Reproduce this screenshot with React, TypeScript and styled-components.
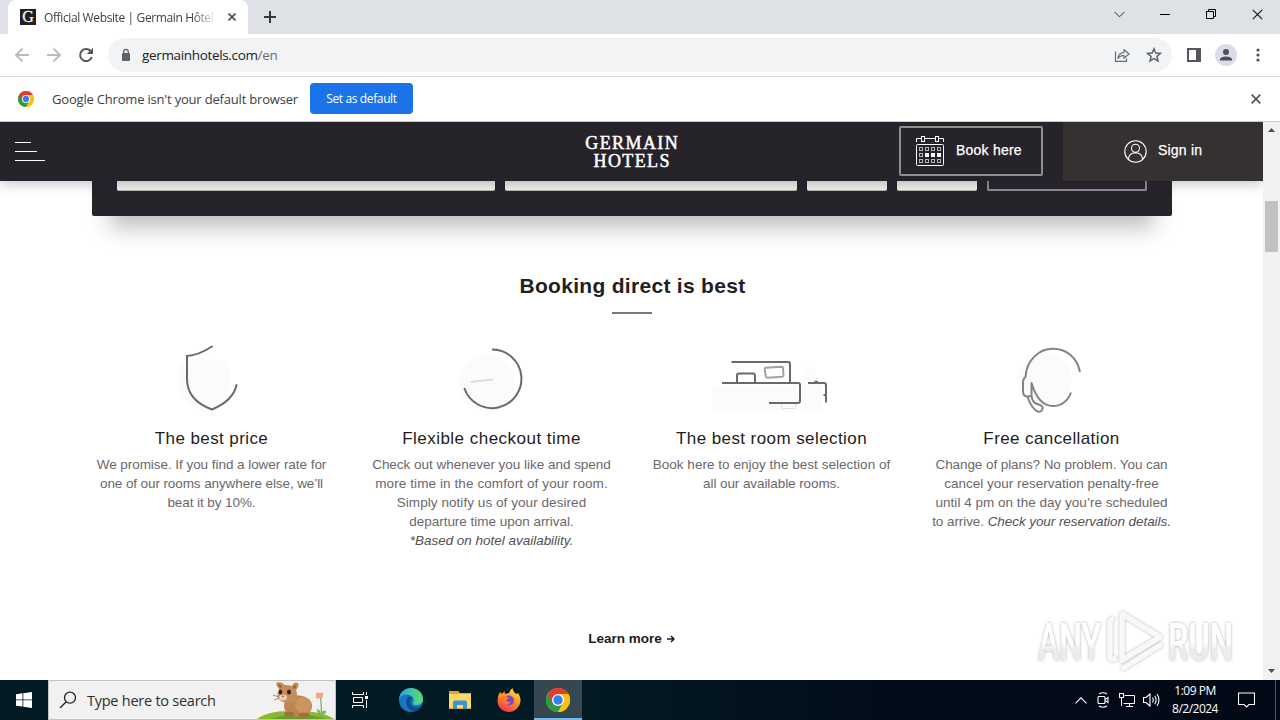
import React from "react";
import styled, { createGlobalStyle, css } from "styled-components";

const uiFont = `"Open Sans", "Noto Sans", sans-serif`;
const siteFont = `"Liberation Sans", Arial, sans-serif`;

const GlobalStyle = createGlobalStyle`
    * {
        box-sizing: border-box;
    }
    body {
        margin: 0;
        background: #ffffff;
        overflow: hidden;
    }
    svg {
        display: block;
        flex: none;
    }
`;

const Screen = styled.div`
    width: 1280px;
    height: 720px;
    display: flex;
    flex-direction: column;
    overflow: hidden;
    font-family: ${uiFont};
`;

/* ---------- browser ---------- */

const TabStrip = styled.div`
    height: 34px;
    flex: none;
    display: flex;
    padding-left: 8px;
    background: #dee1e6;
`;

const Tab = styled.div`
    width: 240px;
    display: flex;
    align-items: center;
    padding: 0 11px 0 12px;
    background: #ffffff;
    border-radius: 8px 8px 0 0;
`;

const Favicon = styled.div`
    width: 16px;
    height: 16px;
    background: #231f20;
    color: #f4f4f4;
    font: 16px/16px "Liberation Serif", serif;
    -webkit-text-stroke: 0.3px #f4f4f4;
    text-align: center;
`;

const TabTitle = styled.div`
    width: 169px;
    margin: 0 15px 0 8px;
    overflow: hidden;
    white-space: nowrap;
    font-size: 12px;
    letter-spacing: -0.38px;
    color: #3c4043;
    mask-image: linear-gradient(90deg, #000 148px, transparent 173px);
`;

const NewTab = styled.div`
    width: 44px;
    display: grid;
    place-items: center;
`;

const WindowButtons = styled.div`
    margin-left: auto;
    display: grid;
    grid-template-columns: repeat(4, 46px);
    place-items: center;
    height: 28px;
`;

const Toolbar = styled.div`
    height: 43px;
    flex: none;
    display: flex;
    align-items: center;
    padding: 0 14px;
    background: #ffffff;
    border-bottom: 1px solid #dadce0;
`;

const NavButtons = styled.div`
    display: flex;
    gap: 16px;
    margin-right: 14px;
`;

const AddressBar = styled.div`
    width: 1064px;
    height: 34px;
    display: flex;
    align-items: center;
    padding: 0 10px;
    border-radius: 17px;
    background: #f1f3f4;
    font-size: 13.5px;
    color: #202124;
`;

const UrlText = styled.span`
    margin-left: 8px;
    letter-spacing: -0.34px;
`;

const UrlPath = styled.span`
    color: #6a6e73;
`;

const AddressActions = styled.div`
    margin-left: auto;
    display: flex;
    gap: 16px;
`;

const ToolbarActions = styled.div`
    display: flex;
    align-items: center;
    gap: 13px;
    margin-left: 14px;
`;

const Avatar = styled.div`
    width: 22px;
    height: 22px;
    border-radius: 50%;
    background: #dadce6;
    display: grid;
    place-items: center;
`;

const InfoBar = styled.div`
    height: 45px;
    flex: none;
    display: flex;
    align-items: center;
    padding: 0 19px 0 18px;
    border-bottom: 1px solid #c9cbce;
    background: #ffffff;
    color: #3c4043;
    font-size: 13px;
`;

const InfoText = styled.span`
    width: 246px;
    margin: 0 12px 0 18px;
    white-space: nowrap;
    letter-spacing: -0.19px;
`;

const DefaultButton = styled.button`
    width: 103px;
    height: 31px;
    margin-top: -2px;
    padding: 0;
    border: 0;
    border-radius: 4px;
    background: #1a73e8;
    color: #ffffff;
    font: 12px ${uiFont};
    letter-spacing: -0.38px;
`;

const InfoClose = styled.div`
    margin-left: auto;
`;

/* ---------- page ---------- */

const Viewport = styled.div`
    height: 558px;
    flex: none;
    display: flex;
    position: relative;
`;

const Page = styled.main`
    width: 1263px;
    display: flex;
    flex-direction: column;
    align-items: center;
    overflow: hidden;
    background: #ffffff;
    font-family: ${siteFont};
`;

const SiteHeader = styled.header`
    width: 100%;
    height: 59px;
    flex: none;
    display: grid;
    grid-template-columns: 1fr 200px 1fr;
    align-items: center;
    background: #27232b;
    color: #ffffff;
    box-shadow: 0 2px 12px rgba(39, 35, 50, 0.3);
    z-index: 1;
`;

const MenuLines = styled.div`
    display: flex;
    flex-direction: column;
    gap: 8px;
    margin-left: 15px;
`;

const MenuLine = styled.span<{ $width: number }>`
    width: ${({ $width }) => $width}px;
    height: 1px;
    background: #ffffff;
`;

const Logo = styled.div`
    font: 18px/18px "Liberation Serif", serif;
    -webkit-text-stroke: 0.5px #ffffff;
    text-align: center;
    white-space: nowrap;
`;

const LogoLine = styled.div<{ $spacing: number }>`
    letter-spacing: ${({ $spacing }) => $spacing}px;
    margin-right: -${({ $spacing }) => $spacing}px;
`;

const HeaderActions = styled.div`
    height: 59px;
    display: flex;
    justify-content: flex-end;
    align-items: center;
    gap: 20px;
`;

const headerLabel = css`
    display: flex;
    align-items: center;
    font-size: 14px;
    color: #ffffff;
    -webkit-text-stroke: 0.25px #ffffff;
    white-space: nowrap;
`;

const ActionLabel = styled.span`
    margin-bottom: 2px;
`;

const BookButton = styled.div`
    ${headerLabel}
    width: 144px;
    height: 50px;
    gap: 12px;
    padding-left: 15px;
    border: 2px solid #8f8c92;
    border-radius: 2px;
    letter-spacing: 0.22px;
    margin-bottom: 1px;
`;

const SignIn = styled.div`
    ${headerLabel}
    width: 200px;
    height: 59px;
    gap: 11px;
    padding: 0 0 1px 61px;
    background: #353131;
    letter-spacing: 0.2px;
`;

// the top of the panel is scrolled away under the header
const BookingPanel = styled.section`
    width: 1080px;
    height: 135px;
    flex: none;
    display: flex;
    gap: 10px;
    margin-top: -100px;
    padding: 100px 25px 25px;
    border-radius: 0 0 2px 2px;
    background: #27232b;
    box-shadow: 0 29px 22px -18px rgba(0, 0, 0, 0.27);
`;

const Field = styled.div<{ $width: number }>`
    width: ${({ $width }) => $width}px;
    height: 10px;
    border-radius: 0 0 2px 2px;
    border-bottom: 1px solid #b8b7b8;
    background: #f2f1ed;
`;

const SearchButton = styled.div`
    width: 160px;
    height: 10px;
    border: 2px solid #8f8c92;
    border-top: 0;
    border-radius: 0 0 2px 2px;
`;

const Heading = styled.h2`
    margin: 56px -2px 0 0;
    font-size: 21px;
    line-height: 28px;
    font-weight: bold;
    letter-spacing: 0.3px;
    color: #231f20;
`;

const Rule = styled.div`
    width: 40px;
    height: 2px;
    margin-top: 12px;
    background: #7c797d;
`;

const Benefits = styled.section`
    display: grid;
    grid-template-columns: repeat(4, 280px);
    margin-top: 31px;
    height: 214px;
`;

const Benefit = styled.article`
    display: flex;
    flex-direction: column;
    align-items: center;
    text-align: center;
`;

const BenefitTitle = styled.h3<{ $spacing: number }>`
    margin: 13px 0 0;
    font-size: 17px;
    line-height: 22px;
    font-weight: normal;
    letter-spacing: ${({ $spacing }) => $spacing}px;
    color: #1f1c20;
`;

const BenefitText = styled.p`
    margin: 5px 0 0;
    font-size: 13.5px;
    line-height: 19px;
    color: #6b686c;
`;

const Line = styled.span<{ $spacing: number }>`
    display: block;
    white-space: nowrap;
    letter-spacing: ${({ $spacing }) => $spacing}px;

    em {
        color: #545155;
    }
`;

const LearnMore = styled.a`
    display: flex;
    align-items: center;
    gap: 5px;
    margin-top: 70px;
    font-size: 13.5px;
    line-height: 20px;
    font-weight: bold;
    letter-spacing: 0.02px;
    color: #1f1c20;
`;

const Scrollbar = styled.div`
    width: 17px;
    display: flex;
    flex-direction: column;
    align-items: center;
    justify-content: space-between;
    padding: 6px 0 7px;
    background: #f1f1f1;
`;

const Thumb = styled.div`
    width: 13px;
    height: 51px;
    margin: 69px 0 auto;
    background: #c1c1c1;
`;

const Watermark = styled.div`
    position: absolute;
    left: 1028px;
    top: 482px;
`;

/* ---------- taskbar ---------- */

const Taskbar = styled.footer`
    height: 40px;
    flex: none;
    display: flex;
    background: linear-gradient(90deg, #011a22 0, #021a23 45%, #020c1a 70%, #020916 100%);
    color: #ffffff;
`;

const TaskItem = styled.div<{ $active?: boolean; $width?: number }>`
    width: ${({ $width = 49 }) => $width}px;
    display: grid;
    place-items: center;
    ${({ $active }) =>
        $active &&
        css`
            background: #35474f;
            border-bottom: 2px solid #76b9ed;
            padding-top: 2px;
        `}
`;

const SearchBox = styled.div`
    width: 288px;
    height: 40px;
    display: flex;
    align-items: center;
    border: 1px solid #bfc3c5;
    background: #f1f1f1;
    color: #2f2f2f;
    font-size: 14.5px;
    letter-spacing: -0.25px;
    padding-left: 10px;
    gap: 10px;
    white-space: nowrap;

    svg:last-child {
        margin-left: auto;
    }
`;

const Tray = styled.div`
    margin-left: auto;
    display: flex;
    align-items: center;
`;

const TrayIcons = styled.div`
    display: flex;
    align-items: center;
    gap: 7px;
    margin-right: 1px;
`;

const Clock = styled.div`
    width: 60px;
    margin: 0 13px 0 4px;
    display: grid;
    justify-items: center;
    font-size: 12px;
    line-height: 18px;
    letter-spacing: -0.5px;
    white-space: nowrap;
`;

const ShowDesktop = styled.div`
    width: 5px;
    height: 40px;
    margin-left: 20px;
    border-left: 1px solid #4d5964;
`;

function Cross({ size, color, width }: { size: number; color: string; width: number }) {
    return (
        <svg width={size} height={size} viewBox="0 0 10 10" stroke={color} strokeWidth={width} fill="none">
            <path d="M.7 .7L9.3 9.3M9.3 .7L.7 9.3" />
        </svg>
    );
}

function ChromeLogo({ size }: { size: number }) {
    return (
        <svg width={size} height={size} viewBox="0 0 48 48">
            <circle cx="24" cy="24" r="24" fill="#fbc116" />
            <path d="M24 24L34.4 30 24 48A24 24 0 0 1 3.2 12Z" fill="#2a9c48" />
            <path d="M3.2 12A24 24 0 0 1 44.8 12H24L13.6 30Z" fill="#e33b2e" />
            <path d="M24 12H44.8A24 24 0 0 1 24 48L34.4 30Z" fill="#fbc116" />
            <circle cx="24" cy="24" r="12" fill="#fff" />
            <circle cx="24" cy="24" r="9.4" fill="#3b7ded" />
        </svg>
    );
}

function CalendarIcon() {
    const rows = [0, 1, 2];
    const cols = [0, 1, 2, 3];
    return (
        <svg width="28" height="30" viewBox="0 0 28 30" fill="none" stroke="#fff">
            <path d="M.5 6V2.5H5M9 2.5H19M23 2.5H27.500V6" />
            <rect x="5.500" y=".5" width="3" height="5" />
            <rect x="19.500" y=".5" width="3" height="5" />
            <rect x=".5" y="8.500" width="27" height="21" rx="1" />
            {rows.map((r) =>
                cols.map((c) => (
                    <rect
                        key={`${r}-${c}`}
                        x={3.5 + c * 6}
                        y={11.5 + r * 6}
                        width="3"
                        height="3"
                        stroke={r === 1 && c > 0 ? "#fff" : "#b5b3b7"}
                        fill={r === 1 && c > 0 ? "#fff" : "none"}
                    />
                ))
            )}
        </svg>
    );
}

function ShieldIcon() {
    return (
        <svg width="130" height="70" viewBox="147 345 130 70" fill="none">
            <path d="M180 364Q196 357 205 359L229 362V386Q226 402 205 413Q180 402 179 384Z" fill="#fbfbfb" />
            <path
                d="M212 346.500Q198 355.500 187 356V379C187 395 197 404 212 409.500C225 404 234 397 236.500 385"
                stroke="#6c696b"
                strokeWidth="2"
                strokeLinecap="round"
            />
        </svg>
    );
}

function ClockIcon() {
    return (
        <svg width="130" height="70" viewBox="427 345 130 70" fill="none" strokeWidth="2">
            <circle cx="487" cy="383" r="28" fill="#fbfbfb" />
            <path d="M470.500 382L493 379.500" stroke="#dcdcdc" />
            <path d="M492 349.500A29.300 29.300 0 1 1 464.300 388" stroke="#6c696b" />
        </svg>
    );
}

function RoomIcon() {
    return (
        <svg width="130" height="70" viewBox="707 345 130 70" fill="none" stroke="#6c696b" strokeWidth="2">
            <path d="M712 386H800V384H822V413H780V410H716Q712 410 712 404Z" fill="#fcfcfc" stroke="none" />
            <circle cx="809" cy="374" r="7" fill="#fcfcfc" stroke="none" />
            <path d="M731.500 362H788Q790 362 790 364V383" />
            <path d="M722 383H798Q800 383 800 385V401Q800 403 798 403H769" />
            <path d="M737 382V375Q737 373.500 739 373.500H753Q755 373.500 755 375.500V382" />
            <path
                d="M765.500 367.800L781.500 366.700Q783 366.700 783 368L783.500 375Q783.500 376.500 782 376.700L767.500 377.700Q766 377.700 765.800 376L764.600 369.500Q764.500 368 765.500 367.800Z"
                stroke="#a3a1a2"
            />
            <path d="M808 383H824Q826 383 826 385V402.500M814.500 381.700H818M824.500 394V396" />
            <path d="M781.500 404V407Q781.500 408.500 783 408.500H794Q796 408.500 796 407V404" stroke="#e2e2e2" strokeWidth="1" />
        </svg>
    );
}

function HeadsetIcon() {
    return (
        <svg width="130" height="70" viewBox="987 345 130 70" fill="none" stroke="#858284" strokeWidth="2" strokeLinejoin="round">
            <circle cx="1045" cy="380" r="27" fill="#fbfbfb" stroke="none" />
            <path d="M1080 372C1077 357 1066 348.800 1053 348.800C1038 348.800 1026.500 361 1025.500 377Q1023 378.500 1023 383V391Q1023 396.500 1027.500 396.500L1031.500 396V383C1036 398 1043 406 1053 406C1061 406 1068 401 1071 392.500" />
            <path d="M1027.500 397C1030 404 1034 410 1038 411.700C1042.500 412.500 1044 407.500 1041 405.500C1038 403 1036 406 1032.500 400L1031.500 396" />
        </svg>
    );
}

function Critter() {
    return (
        <svg width="78" height="38" viewBox="0 0 78 38">
            <path d="M0 38Q12 29 36 30Q64 29 77 38Z" fill="#8cb82f" />
            <path d="M14 38Q40 29 70 38Z" fill="#6b9d2c" />
            <path d="M64 36Q65 23 63 14" stroke="#72ad61" strokeWidth="1.200" fill="none" />
            <path d="M64 34Q59 31 60 28Q64 29 64 34Q65 28 69 30Q70 33 64 34Z" fill="#79b85e" />
            <path d="M59 13Q60 10 63 12Q67 10 66 15Q66 18 63 17Q59 19 59 16Z" fill="#f4a58a" />
            <ellipse cx="41" cy="25" rx="14" ry="10.500" fill="#bd8450" />
            <ellipse cx="46" cy="24" rx="8" ry="8" fill="#cb9560" />
            <path d="M22 8Q17 2 21 1Q25 1 28 4Q32 4 35 5Q37 0 41 2Q43 4 39 9Q42 16 37 21Q31 24 24 20Q18 16 22 8Z" fill="#c48d59" />
            <path d="M21 3L25 5 23 7ZM39 4L36 6 38 8Z" fill="#87532f" />
            <ellipse cx="23.500" cy="11" rx="1.800" ry="2.500" fill="#302019" />
            <ellipse cx="32" cy="11" rx="2" ry="2.500" fill="#302019" />
            <ellipse cx="26" cy="16.500" rx="4" ry="3" fill="#ead1b2" />
            <path d="M25 15H27L26 16ZM16 14L22 16M17 19L22 17" stroke="#8c604a" strokeWidth=".7" />
            <ellipse cx="32" cy="33" rx="5" ry="2.200" fill="#a56d3d" />
            <ellipse cx="47" cy="34" rx="6" ry="2.200" fill="#a56d3d" />
        </svg>
    );
}

function AnyRunMark() {
    return (
        <svg width="216" height="72" viewBox="1028 604 216 72">
            <defs>
                <linearGradient id="fade" x1="0" y1="0" x2="0" y2="1">
                    <stop offset="0.5" stopColor="#ffffff" />
                    <stop offset="0.62" stopColor="#ececec" />
                </linearGradient>
                <filter id="halo" x="-10%" y="-10%" width="120%" height="120%">
                    <feDropShadow dx="0" dy="0" stdDeviation="1.600" floodColor="#000" floodOpacity="0.36" />
                </filter>
            </defs>
            <g filter="url(#halo)" fill="url(#fade)" fontFamily="Roboto, sans-serif" fontWeight="500" fontSize="52">
                <text x="1038" y="660" textLength="63" lengthAdjust="spacingAndGlyphs">
                    ANY
                </text>
                <text x="1168" y="660" textLength="65" lengthAdjust="spacingAndGlyphs">
                    RUN
                </text>
                <g fill="none" stroke="#f8f8f8" strokeWidth="5" strokeLinejoin="round">
                    <path d="M1122 614L1160 637L1122 660Z" />
                    <path d="M1114 619Q1110 619 1110 624V657Q1111 661 1116 658M1122 669L1162 644" />
                </g>
            </g>
        </svg>
    );
}

// [content, letter spacing]
type TextLine = [React.ReactNode, number];

interface BenefitItem {
    title: string;
    spacing: number;
    icon: React.ReactNode;
    lines: TextLine[];
}

const benefits: BenefitItem[] = [
    {
        title: "The best price",
        spacing: 0.4,
        icon: <ShieldIcon />,
        lines: [
            ["We promise. If you find a lower rate for", -0.05],
            ["one of our rooms anywhere else, we’ll", -0.1],
            ["beat it by 10%.", -0.08],
        ],
    },
    {
        title: "Flexible checkout time",
        spacing: 0.48,
        icon: <ClockIcon />,
        lines: [
            ["Check out whenever you like and spend", -0.02],
            ["more time in the comfort of your room.", 0.1],
            ["Simply notify us of your desired", 0.06],
            ["departure time upon arrival.", -0.02],
            [<em>*Based on hotel availability.</em>, -0.02],
        ],
    },
    {
        title: "The best room selection",
        spacing: 0.42,
        icon: <RoomIcon />,
        lines: [
            ["Book here to enjoy the best selection of", 0.03],
            ["all our available rooms.", -0.08],
        ],
    },
    {
        title: "Free cancellation",
        spacing: 0.4,
        icon: <HeadsetIcon />,
        lines: [
            ["Change of plans? No problem. You can", -0.08],
            ["cancel your reservation penalty-free", 0],
            ["until 4 pm on the day you’re scheduled", 0.02],
            [
                <>
                    to arrive. <em>Check your reservation details.</em>
                </>,
                -0.07,
            ],
        ],
    },
];

function Browser() {
    return (
        <>
            <TabStrip>
                <Tab>
                    <Favicon>G</Favicon>
                    <TabTitle>Official Website | Germain Hôtels</TabTitle>
                    <Cross size={8} color="#4a4d51" width={2} />
                </Tab>
                <NewTab>
                    <svg width="12" height="12" viewBox="0 0 12 12" stroke="#35383c" strokeWidth="2">
                        <path d="M6 0V12M0 6H12" />
                    </svg>
                </NewTab>
                <WindowButtons>
                    <svg width="11" height="7" viewBox="0 0 11 7" fill="none" stroke="#333">
                        <path d="M.5 .8L5.500 5.800L10.500 .8" />
                    </svg>
                    <svg width="10" height="1">
                        <rect width="10" height="1" fill="#000" />
                    </svg>
                    <svg width="10" height="10" viewBox="0 0 10 10" fill="none" stroke="#000">
                        <path d="M.5 2.500H7.500V9.500H.5ZM2.500 2.500V.5H9.500V7.500H7.500" />
                    </svg>
                    <Cross size={11} color="#111" width={1} />
                </WindowButtons>
            </TabStrip>
            <Toolbar>
                <NavButtons>
                    <svg width="16" height="16" viewBox="0 0 16 16" fill="none" stroke="#babcbe" strokeWidth="1.800">
                        <path d="M15 8H2M8.500 1.500L2 8L8.500 14.500" />
                    </svg>
                    <svg width="16" height="16" viewBox="0 0 16 16" fill="none" stroke="#babcbe" strokeWidth="1.800">
                        <path d="M1 8H14M7.500 1.500L14 8L7.500 14.500" />
                    </svg>
                    <svg width="16" height="16" viewBox="0 0 16 16" fill="none" stroke="#54575b" strokeWidth="2">
                        <path d="M13.800 10A6 6 0 1 1 12.500 4" />
                        <path d="M15 .8V7H8.800Z" fill="#54575b" stroke="none" />
                    </svg>
                </NavButtons>
                <AddressBar>
                    <svg width="16" height="16" viewBox="0 0 16 16">
                        <rect x="4" y="6" width="8" height="8" rx="1" fill="#5f6368" />
                        <path d="M5.700 6.500V4.700A2.300 2.300 0 0 1 10.300 4.700V6.500" fill="none" stroke="#5f6368" strokeWidth="1.300" />
                    </svg>
                    <UrlText>
                        germainhotels.com<UrlPath>/en</UrlPath>
                    </UrlText>
                    <AddressActions>
                        <svg width="16" height="16" viewBox="0 0 16 16" fill="none" stroke="#696c71" strokeWidth="1.200">
                            <path d="M1.500 4.500V14.400H12.500V11.500" />
                            <path d="M4 11.500Q4.500 5.800 10 5.300V2.500L15 7L10 11.300V8.500Q6 8.300 4 11.500Z" strokeLinejoin="round" />
                        </svg>
                        <svg width="16" height="16" viewBox="0 0 16 16" fill="none" stroke="#5f6368" strokeWidth="1.500">
                            <path d="M8 1.800L9.800 6L14.400 6.400L10.900 9.400L12 13.900L8 11.500L4 13.900L5.100 9.400L1.600 6.400L6.200 6Z" />
                        </svg>
                    </AddressActions>
                </AddressBar>
                <ToolbarActions>
                    <svg width="16" height="16" viewBox="0 0 16 16">
                        <path d="M1 1H15V15H1ZM3 3V13H10V3Z" fill="#53565a" fillRule="evenodd" />
                    </svg>
                    <Avatar>
                        <svg width="14" height="14" viewBox="0 0 14 14" fill="#4b4f60">
                            <circle cx="7" cy="4" r="3" />
                            <path d="M1 12.500V11Q2 8.500 7 8.500Q12 8.500 13 11V12.500Z" />
                        </svg>
                    </Avatar>
                    <svg width="16" height="16" viewBox="0 0 16 16" fill="#4f5256">
                        <circle cx="8" cy="3" r="1.600" />
                        <circle cx="8" cy="8" r="1.600" />
                        <circle cx="8" cy="13" r="1.600" />
                    </svg>
                </ToolbarActions>
            </Toolbar>
            <InfoBar>
                <ChromeLogo size={16} />
                <InfoText>Google Chrome isn't your default browser</InfoText>
                <DefaultButton>Set as default</DefaultButton>
                <InfoClose>
                    <Cross size={10} color="#55585c" width={1.8} />
                </InfoClose>
            </InfoBar>
        </>
    );
}

function App() {
    return (
        <>
            <GlobalStyle />
            <Screen>
                <Browser />
                <Viewport>
                    <Page>
                        <SiteHeader>
                            <MenuLines>
                                <MenuLine $width={16} />
                                <MenuLine $width={22} />
                                <MenuLine $width={30} />
                            </MenuLines>
                            <Logo>
                                <LogoLine $spacing={1.4}>GERMAIN</LogoLine>
                                <LogoLine $spacing={1.4}>HOTELS</LogoLine>
                            </Logo>
                            <HeaderActions>
                                <BookButton>
                                    <CalendarIcon />
                                    <ActionLabel>Book here</ActionLabel>
                                </BookButton>
                                <SignIn>
                                    <svg width="23" height="23" viewBox="0 0 23 23" fill="none" stroke="#fff" strokeWidth="1.100">
                                        <circle cx="11.500" cy="11.500" r="10.700" />
                                        <circle cx="11.500" cy="8.300" r="4" />
                                        <path d="M4.300 19.300Q5 12.800 11.500 12.700Q18 12.800 18.700 19.300" />
                                    </svg>
                                    <ActionLabel>Sign in</ActionLabel>
                                </SignIn>
                            </HeaderActions>
                        </SiteHeader>
                        <BookingPanel>
                            <Field $width={378} />
                            <Field $width={292} />
                            <Field $width={80} />
                            <Field $width={80} />
                            <SearchButton />
                        </BookingPanel>
                        <Heading>Booking direct is best</Heading>
                        <Rule />
                        <Benefits>
                            {benefits.map(({ title, spacing, icon, lines }) => (
                                <Benefit key={title}>
                                    {icon}
                                    <BenefitTitle $spacing={spacing}>{title}</BenefitTitle>
                                    <BenefitText>
                                        {lines.map(([content, lineSpacing], i) => (
                                            <Line key={i} $spacing={lineSpacing}>
                                                {content}
                                            </Line>
                                        ))}
                                    </BenefitText>
                                </Benefit>
                            ))}
                        </Benefits>
                        <LearnMore>
                            Learn more
                            <svg width="8" height="8" viewBox="0 0 8 8" fill="none" stroke="#1f1c20" strokeWidth="1.500">
                                <path d="M0 4H7M4 1L7 4L4 7" />
                            </svg>
                        </LearnMore>
                    </Page>
                    <Scrollbar>
                        <svg width="7" height="4" viewBox="0 0 7 4">
                            <path d="M0 4L3.500 0L7 4Z" fill="#505050" />
                        </svg>
                        <Thumb />
                        <svg width="7" height="4" viewBox="0 0 7 4">
                            <path d="M0 0L3.500 4L7 0Z" fill="#505050" />
                        </svg>
                    </Scrollbar>
                    <Watermark>
                        <AnyRunMark />
                    </Watermark>
                </Viewport>
                <Taskbar>
                    <TaskItem $width={48}>
                        <svg width="16" height="16" viewBox="0 0 16 16" fill="#fff">
                            <path d="M0 2.200L6.500 1.300V7.500H0ZM7.300 1.200L16 0V7.500H7.300ZM0 8.300H6.500V14.600L0 13.700ZM7.300 8.300H16V16L7.300 14.800Z" />
                        </svg>
                    </TaskItem>
                    <SearchBox>
                        <svg width="18" height="18" viewBox="0 0 18 18" fill="none" stroke="#222" strokeWidth="1.300">
                            <circle cx="11" cy="6.700" r="5.500" />
                            <path d="M7.200 10.700L1 17" />
                        </svg>
                        Type here to search
                        <Critter />
                    </SearchBox>
                    <TaskItem>
                        <svg width="17" height="16" viewBox="0 0 17 16" fill="none" stroke="#fff">
                            <path d="M.5 0V2.500H11.500V0M.5 16V13.500H11.500V16M1.500 5.500H10.500V10.500H1.500ZM14.500 0V3M14.500 8V16" />
                            <rect x="13.500" y="4.500" width="2" height="2" fill="#fff" />
                        </svg>
                    </TaskItem>
                    <TaskItem $width={51}>
                        <svg width="24" height="24" viewBox="0 0 24 24">
                            <defs>
                                <linearGradient id="edgeTop" x1="0" x2="1">
                                    <stop offset="0" stopColor="#2aa5dc" />
                                    <stop offset="1" stopColor="#5bdc70" />
                                </linearGradient>
                            </defs>
                            <circle cx="12" cy="12" r="12" fill="#1775c8" />
                            <path
                                d="M0 11C1 4 6 0 12 0C19 0 24 5 24 11C24 15 21 17 17 17C14 17 13.500 15.500 14.500 14C15.500 10 12 6.500 7.500 6.500C4 6.500 1.500 8 0 11Z"
                                fill="url(#edgeTop)"
                            />
                            <path d="M9 9C5 14 8 22 15 23.500Q20 22 22.500 18C17 21 11 19 11.500 13Q12 10.500 14 10Q12 8 9 9Z" fill="#114b87" />
                        </svg>
                    </TaskItem>
                    <TaskItem $width={47}>
                        <svg width="22" height="18" viewBox="0 0 22 18">
                            <path d="M0 0H9L11 2H22V18H0Z" fill="#e6a52a" />
                            <path d="M0 3H22V17H0Z" fill="#fbd86c" />
                            <path d="M4 18V11Q4 9.500 6 9.500H16Q18 9.500 18 11V18H14V14H8V18Z" fill="#3f93cf" />
                        </svg>
                    </TaskItem>
                    <TaskItem $width={51}>
                        <svg width="24" height="24" viewBox="0 0 24 24">
                            <defs>
                                <linearGradient id="fox" x1="0.800" y1="0" x2="0.300" y2="1">
                                    <stop offset="0" stopColor="#ffe63c" />
                                    <stop offset="0.450" stopColor="#ff9722" />
                                    <stop offset="1" stopColor="#f5304f" />
                                </linearGradient>
                            </defs>
                            <path
                                d="M3 4L5 6L7.500 3L8 6L12 5Q13 2 15.500 0Q16 4 19.500 6L21 5Q24 9 23.500 13C23 19 18 24 12 24C5 24 .5 19 .5 12.500Q.5 7.500 3 4Z"
                                fill="url(#fox)"
                            />
                            <circle cx="12" cy="12.500" r="5" fill="#7a45d4" />
                            <path d="M5 9Q9 7 12 10.500Q9 11 9.500 13Q12 15 14 13Q12 18 8 16Z" fill="#ff7a27" />
                        </svg>
                    </TaskItem>
                    <TaskItem $active $width={48}>
                        <ChromeLogo size={24} />
                    </TaskItem>
                    <Tray>
                        <TrayIcons>
                            <svg width="12" height="7" viewBox="0 0 12 7" fill="none" stroke="#fff" strokeWidth="1.100">
                                <path d="M.5 6.300L6 .8L11.500 6.300" />
                            </svg>
                            <svg width="18" height="16" viewBox="0 0 18 16" fill="none" stroke="#fff" strokeWidth="1.100">
                                <rect x="4" y="4.500" width="7" height="7" rx="1" />
                                <path d="M11 7.500L14 5.500V10.500L11 8.500M5 2Q9 -.5 13 2M5 14Q9 16.500 13 14" />
                            </svg>
                            <svg width="17" height="14" viewBox="0 0 17 14" fill="none" stroke="#fff">
                                <path d="M5.500 2.500H15.500V10.500H4.500M10.500 10.500V13.500M7 13.500H14M2.500 5V13" />
                                <rect x=".5" y=".5" width="4" height="4" />
                            </svg>
                            <svg width="17" height="14" viewBox="0 0 17 14" fill="none" stroke="#fff" strokeWidth="1.100">
                                <path d="M.5 4.500H3L7 1V13L3 9.500H.5ZM9.500 4.500Q11 7 9.500 9.500M11.700 2.700Q14.500 7 11.700 11.300M14 1Q18 7 14 13" />
                            </svg>
                        </TrayIcons>
                        <Clock>
                            <span>1:09 PM</span>
                            <span>8/2/2024</span>
                        </Clock>
                        <svg width="17" height="16" viewBox="0 0 17 16" fill="none" stroke="#fff" strokeWidth="1.100">
                            <path d="M.5 1H16.500V12.500H11L8.500 15L6 12.500H.5Z" />
                        </svg>
                        <ShowDesktop />
                    </Tray>
                </Taskbar>
            </Screen>
        </>
    );
}

export default App;
